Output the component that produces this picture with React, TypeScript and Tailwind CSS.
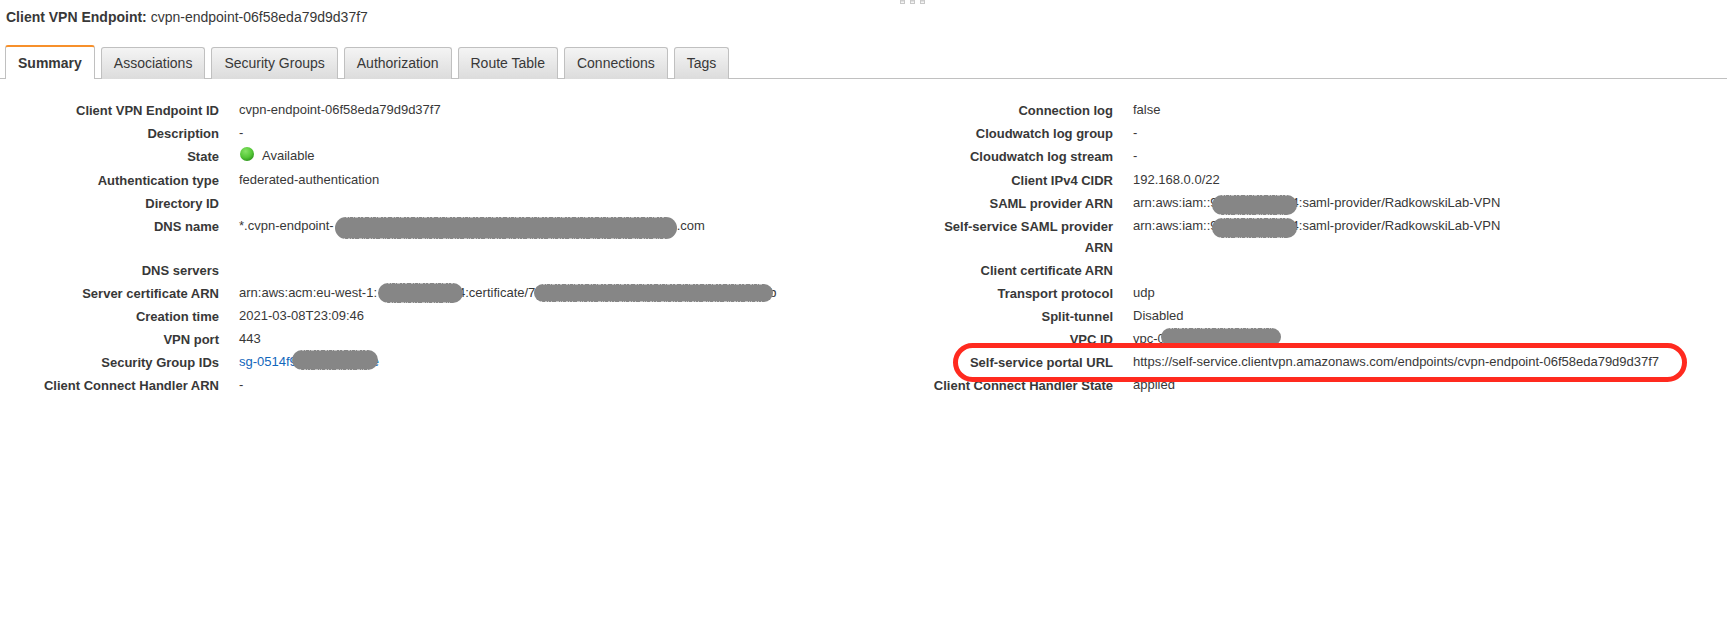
import { useState } from 'react'
import type { ReactNode } from 'react'
import clsx from 'clsx'

const TABS = ['Summary', 'Associations', 'Security Groups', 'Authorization', 'Route Table', 'Connections', 'Tags']

type Field = { label: string; value?: ReactNode; rowClass?: string; highlight?: boolean }

// Grey marker stroke drawn over the sensitive part of a value
function Redacted({ width, height = 20, className }: { width: number; height?: number; className?: string }) {
  const r = height / 2
  return (
    <svg
      width={width}
      height={height}
      viewBox={`0 0 ${width} ${height}`}
      className={clsx('relative inline-block shrink-0', className)}
      aria-label="redacted"
    >
      <rect width={width} height={height} rx={r} fill="#868686" />
      <path d={`M${r} 0.5H${width - r}`} stroke="#fff" strokeOpacity="0.5" strokeDasharray="2 1 1 3 1 1 3 2 1 2 2 4" />
      <path d={`M${r - 2} ${height - 0.5}H${width - r}`} stroke="#fff" strokeOpacity="0.5" strokeDasharray="1 3 2 1 1 2 1 4 3 1 1 1" />
    </svg>
  )
}

function StateDot() {
  return (
    <svg width="14" height="14" viewBox="0 0 14 14" className="ml-px mr-2 mb-1 inline-block">
      <defs>
        <radialGradient id="state-dot" cx="0.4" cy="0.3" r="0.75">
          <stop offset="0" stopColor="#86e266" />
          <stop offset="0.6" stopColor="#55c737" />
          <stop offset="1" stopColor="#2b921b" />
        </radialGradient>
      </defs>
      <circle cx="7" cy="7" r="7" fill="url(#state-dot)" />
    </svg>
  )
}

const LEFT: Field[] = [
  { label: 'Client VPN Endpoint ID', value: 'cvpn-endpoint-06f58eda79d9d37f7' },
  { label: 'Description', value: '-' },
  { label: 'State', value: <><StateDot />Available</>, rowClass: 'min-h-6' },
  { label: 'Authentication type', value: 'federated-authentication' },
  { label: 'Directory ID' },
  { label: 'DNS name', value: <>*.cvpn-endpoint-<Redacted width={342} height={22} className="ml-px top-0.5" />.com</>, rowClass: 'min-h-11' },
  { label: 'DNS servers' },
  {
    label: 'Server certificate ARN',
    value: <>arn:aws:acm:eu-west-1:<Redacted width={85} className="ml-px -mr-[5px]" />4:certificate/7<Redacted width={239} height={18} className="-ml-px -mr-1" />b</>,
  },
  { label: 'Creation time', value: '2021-03-08T23:09:46' },
  { label: 'VPN port', value: '443' },
  {
    label: 'Security Group IDs',
    value: <a href="#sg" className="inline-flex items-center text-[#1166bb]">sg-0514f9<Redacted width={86} className="-ml-[5px] -mr-1.5 -top-0.5" />e</a>,
  },
  { label: 'Client Connect Handler ARN', value: '-' },
]

const samlArn = <>arn:aws:iam::9<Redacted width={85} className="-ml-1.5 -mr-[5px] top-0.5" />4:saml-provider/RadkowskiLab-VPN</>

const RIGHT: Field[] = [
  { label: 'Connection log', value: 'false' },
  { label: 'Cloudwatch log group', value: '-' },
  { label: 'Cloudwatch log stream', value: '-', rowClass: 'min-h-6' },
  { label: 'Client IPv4 CIDR', value: '192.168.0.0/22' },
  { label: 'SAML provider ARN', value: samlArn },
  { label: 'Self-service SAML provider ARN', value: samlArn },
  { label: 'Client certificate ARN' },
  { label: 'Transport protocol', value: 'udp' },
  { label: 'Split-tunnel', value: 'Disabled' },
  { label: 'VPC ID', value: <>vpc-0<Redacted width={120} height={18} className="-ml-1 -top-0.5" /></> },
  {
    label: 'Self-service portal URL',
    value: 'https://self-service.clientvpn.amazonaws.com/endpoints/cvpn-endpoint-06f58eda79d9d37f7',
    highlight: true,
  },
  { label: 'Client Connect Handler State', value: 'applied' },
]

function FieldList({ fields }: { fields: Field[] }) {
  return (
    <dl className="flex flex-col items-start pl-[29px] text-[13px] leading-[21px]">
      {fields.map(f => (
        <div key={f.label} className={clsx('relative flex', f.rowClass ?? 'min-h-[23px]')}>
          <dt className="w-[190px] shrink-0 py-px text-right font-bold">{f.label}</dt>
          <dd className="ml-5 flex h-[21px] items-center whitespace-nowrap">{f.value}</dd>
          {f.highlight && (
            <div className="pointer-events-none absolute -inset-y-2 -right-7 left-[30px] z-10 rounded-full border-5 border-[#ff2a1f]" />
          )}
        </div>
      ))}
    </dl>
  )
}

export default function App() {
  const [active, setActive] = useState('Summary')

  return (
    <div className="relative bg-white font-['Liberation_Sans',Arial,sans-serif] text-[#383838]">
      {/* Split pane grip */}
      <div className="absolute left-[900px] top-0 flex gap-[5px]">
        {[0, 1, 2].map(i => (
          <span key={i} className="h-1 w-[5px] border border-t-0 border-[#c8c8c8] bg-linear-to-b from-[#c4c4c4] to-white" />
        ))}
      </div>

      <h1 className="px-1.5 pt-2 text-sm leading-[18px]">
        <span className="font-bold">Client VPN Endpoint:</span> cvpn-endpoint-06f58eda79d9d37f7
      </h1>

      <div role="tablist" className="mt-[19px] flex items-end gap-1.5 border-b border-[#c0c0c0] pl-[5px] text-sm">
        {TABS.map(t => (
          <button
            key={t}
            role="tab"
            aria-selected={active === t}
            onClick={() => setActive(t)}
            className={clsx(
              '-mb-px rounded-t-[3px] border-x border-[#c0c0c0] px-3',
              active === t
                ? 'h-[34px] border-t-2 border-t-[#f7902b] bg-white font-bold'
                : 'h-8 border-t bg-linear-to-b from-[#f4f4f4] to-[#dcdcdc] pb-0.5'
            )}
          >
            {t}
          </button>
        ))}
      </div>

      <div className="grid grid-cols-[894fr_833fr] pt-5">
        <FieldList fields={LEFT} />
        <FieldList fields={RIGHT} />
      </div>
    </div>
  )
}
